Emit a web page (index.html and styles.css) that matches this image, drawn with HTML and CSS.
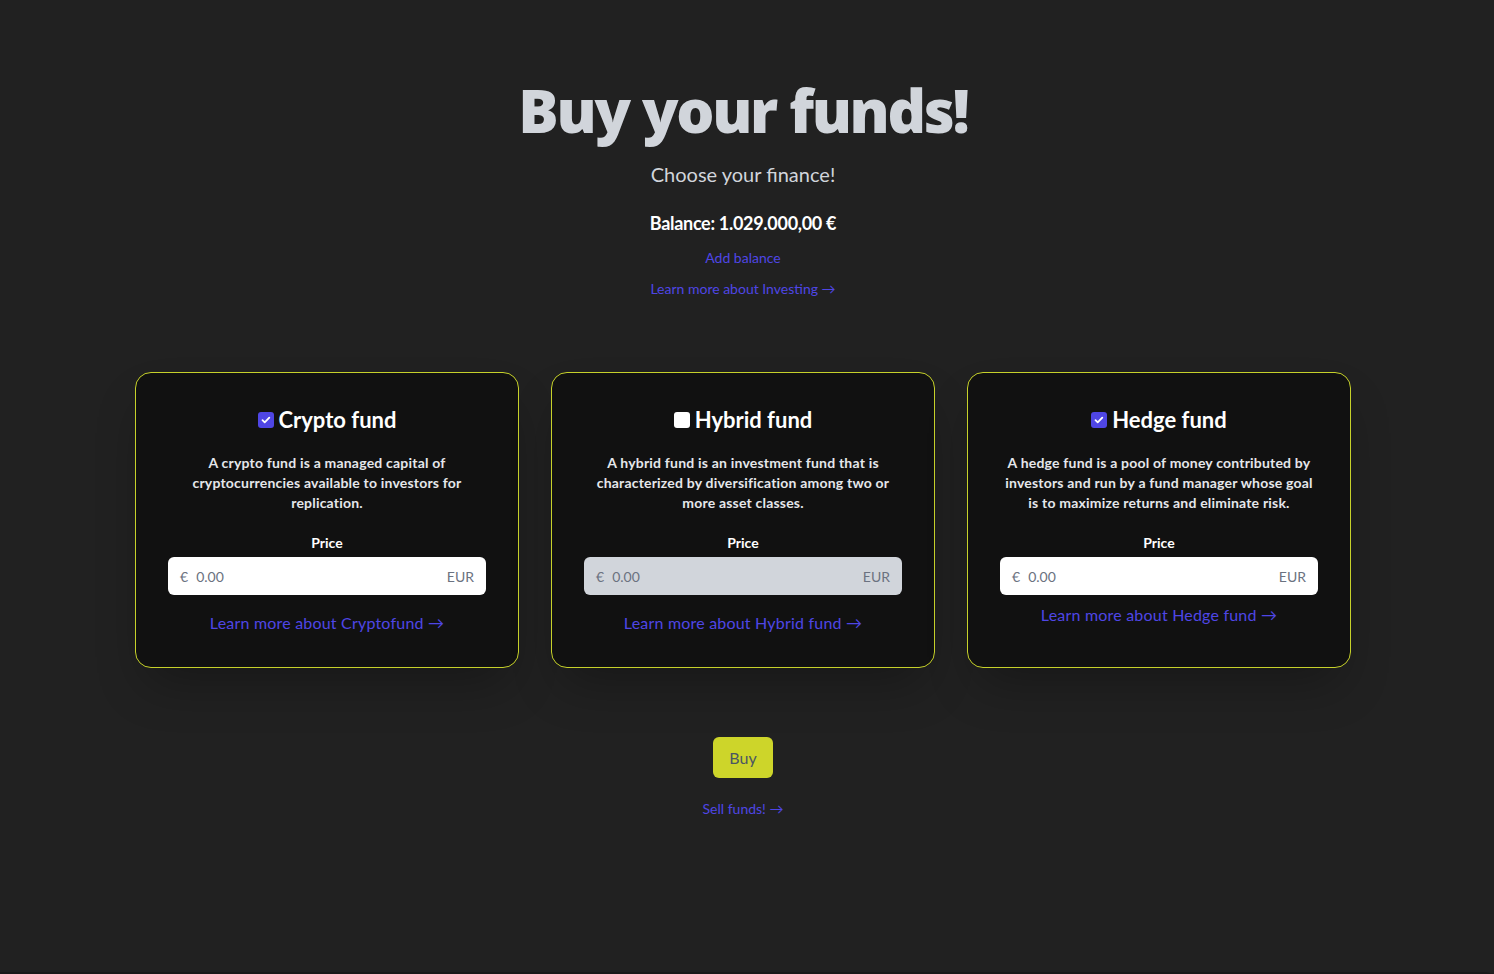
FILE: index.html
```html
<!DOCTYPE html>
<html lang="en">

<head>
    <meta charset="UTF-8">
    <meta name="viewport" content="width=device-width, initial-scale=1.0">
    <title>Buy your funds</title>
    <link rel="stylesheet" href="styles.css">
</head>

<body>
    <div class="page">
        <!-- Header -->
        <header class="intro">
            <h1>Buy your funds!</h1>
            <p class="subtitle">Choose your finance!</p>
            <p class="balance">Balance: 1.029.000,00 €</p>
            <a class="link small" href="#">Add balance</a>
            <a class="link small" href="#">Learn more about Investing →</a>
        </header>

        <!-- Funds -->
        <div class="funds">
            <div class="fund">
                <h3 class="fund-title">
                    <span class="check checked">
                        <svg viewBox="0 0 16 16" width="16" height="16"><path d="M4.5 8.2l2.2 2.2 4.6-4.8" fill="none" stroke="#fff" stroke-width="1.8" stroke-linecap="round" stroke-linejoin="round"/></svg>
                    </span>
                    Crypto fund
                </h3>
                <p class="fund-text">A crypto fund is a managed capital of cryptocurrencies available to investors for replication.</p>
                <label class="price-label">Price</label>
                <div class="price-input">
                    <span class="unit">€</span>
                    <input type="text" placeholder="0.00">
                    <span class="unit">EUR</span>
                </div>
                <a class="link fund-link" href="#">Learn more about Cryptofund →</a>
            </div>

            <div class="fund">
                <h3 class="fund-title">
                    <span class="check"></span>
                    Hybrid fund
                </h3>
                <p class="fund-text">A hybrid fund is an investment fund that is characterized by diversification among two or more asset classes.</p>
                <label class="price-label">Price</label>
                <div class="price-input disabled">
                    <span class="unit">€</span>
                    <input type="text" placeholder="0.00" disabled>
                    <span class="unit">EUR</span>
                </div>
                <a class="link fund-link" href="#">Learn more about Hybrid fund →</a>
            </div>

            <div class="fund">
                <h3 class="fund-title">
                    <span class="check checked">
                        <svg viewBox="0 0 16 16" width="16" height="16"><path d="M4.5 8.2l2.2 2.2 4.6-4.8" fill="none" stroke="#fff" stroke-width="1.8" stroke-linecap="round" stroke-linejoin="round"/></svg>
                    </span>
                    Hedge fund
                </h3>
                <p class="fund-text">A hedge fund is a pool of money contributed by investors and run by a fund manager whose goal is to maximize returns and eliminate risk.</p>
                <label class="price-label">Price</label>
                <div class="price-input">
                    <span class="unit">€</span>
                    <input type="text" placeholder="0.00">
                    <span class="unit">EUR</span>
                </div>
                <a class="link fund-link close" href="#">Learn more about Hedge fund →</a>
            </div>
        </div>

        <!-- Buttons -->
        <div class="actions">
            <button class="buy">Buy</button>
            <a class="link small" href="#">Sell funds! →</a>
        </div>
    </div>
</body>

</html>
```

FILE: styles.css
```css
html,
body {
    margin: 0;
    height: 100%;
}

body {
    font-family: Lato, "Open Sans", sans-serif;
    background-color: #212121;
    color: #fff;
    border-right: 8px solid #212121;
    border-bottom: 2px solid #1a1a1a;
    box-sizing: border-box;
}

.page {
    display: flex;
    flex-direction: column;
    align-items: center;
    padding-top: 80px;
}

.intro {
    display: flex;
    flex-direction: column;
    align-items: center;
}

.intro h1 {
    margin: 0;
    font-family: "Open Sans", sans-serif;
    font-size: 60px;
    line-height: 60px;
    font-weight: 800;
    letter-spacing: -2.3px;
    color: #d1d5db;
}

.subtitle {
    margin: 20px 0 0;
    font-size: 20px;
    line-height: 28px;
    color: #d1d5db;
}

.balance {
    margin: 21px 0 0;
    font-size: 18px;
    line-height: 28px;
    font-weight: 700;
    letter-spacing: -0.3px;
}

.link {
    color: #4f46e5;
    text-decoration: none;
}

.small {
    font-size: 14px;
    line-height: 20px;
}

.intro .small {
    margin-top: 11px;
}

.funds {
    display: grid;
    grid-template-columns: repeat(3, 384px);
    gap: 32px;
    margin-top: 73px;
}

.fund {
    display: flex;
    flex-direction: column;
    align-items: center;
    padding: 32px;
    background: #111111;
    border: 1px solid #c6d12a;
    border-radius: 16px;
    box-shadow: 0 25px 50px -12px rgba(0, 0, 0, 0.3);
    text-align: center;
}

.fund-title {
    display: flex;
    align-items: center;
    gap: 5px;
    margin: 0;
    font-size: 22px;
    line-height: 30px;
    font-weight: 700;
}

.check {
    display: inline-flex;
    width: 16px;
    height: 16px;
    border-radius: 3px;
    background: #fff;
}

.check.checked {
    background: #4f46e5;
}

.fund-text {
    margin: 18px 0 0;
    max-width: 316px;
    font-size: 14px;
    line-height: 20px;
    font-weight: 700;
    letter-spacing: 0.2px;
    color: #e5e7eb;
}

.price-label {
    margin-top: 20px;
    font-size: 14px;
    line-height: 20px;
    font-weight: 700;
}

.price-input {
    display: flex;
    align-items: center;
    box-sizing: border-box;
    width: 100%;
    height: 38px;
    margin-top: 4px;
    padding: 0 12px;
    background: #fff;
    border-radius: 6px;
    color: #6b7280;
    font-size: 14px;
}

.price-input.disabled {
    background: #d1d5db;
}

.price-input input {
    flex: 1;
    min-width: 0;
    margin-left: 8px;
    padding: 0;
    border: none;
    background: transparent;
    font-family: inherit;
    font-size: 14px;
    outline: none;
}

.price-input input::placeholder {
    color: #6b7280;
}

.fund-link {
    margin-top: 16px;
    font-size: 16px;
    line-height: 24px;
    letter-spacing: 0.2px;
}

.fund-link.close {
    margin-top: 8px;
}

.actions {
    display: flex;
    flex-direction: column;
    align-items: center;
    margin-top: 69px;
}

.buy {
    padding: 8px 16px;
    border: none;
    border-radius: 6px;
    background: #cdd52a;
    color: #4b5563;
    font-family: inherit;
    font-size: 16px;
    line-height: 25px;
    cursor: pointer;
}

.actions .small {
    margin-top: 21px;
}
```
